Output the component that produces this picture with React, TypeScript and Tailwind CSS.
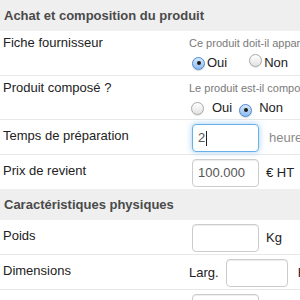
import React from "react";

function Radio({ checked }: { checked?: boolean }) {
  return checked ? (
    <span className="inline-flex h-[13px] w-[13px] shrink-0 items-center justify-center rounded-full border border-[#4a86d4] bg-gradient-to-b from-[#d8e9fb] to-[#8ebbef] shadow-[0_1px_1px_rgba(0,0,0,0.15)]">
      <span className="h-[4px] w-[4px] rounded-full bg-[#1c1c1c]" />
    </span>
  ) : (
    <span className="inline-block h-[13px] w-[13px] shrink-0 rounded-full border border-[#a8a8a8] bg-gradient-to-b from-[#ffffff] to-[#e2e2e2] shadow-[0_1px_1px_rgba(0,0,0,0.1)]" />
  );
}

function Field({ value, focused, w = "w-[67px]" }: { value?: string; focused?: boolean; w?: string }) {
  return (
    <div
      className={
        focused
          ? `${w} h-[28px] shrink-0 rounded-[4px] border border-[#66afe9] bg-white pl-[5px] flex items-center text-[13px] text-[#555] shadow-[0_0_6px_rgba(102,175,233,0.6)]`
          : `${w} h-[28px] shrink-0 rounded-[4px] border border-[#cccccc] bg-white pl-[5px] flex items-center text-[13px] text-[#555] shadow-[inset_0_1px_1px_rgba(0,0,0,0.075)]`
      }
    >
      {value}
      {focused && <span className="ml-[1px] h-[15px] w-px bg-[#222]" />}
    </div>
  );
}

function Header({ title }: { title: string }) {
  return (
    <div className="h-[31px] flex items-center bg-[#efefef] pl-[4px] text-[13px] font-bold text-[#4a4a4a]">
      {title}
    </div>
  );
}

export default function App() {
  return (
    <div className="w-[300px] h-[300px] overflow-hidden bg-white font-['Liberation_Sans',Arial,sans-serif] text-[13px] text-[#222] leading-[18px]">
      <Header title="Achat et composition du produit" />

      <div className="flex h-[45px] border-b border-[#e8e8e8]">
        <div className="w-[189px] shrink-0 pl-[3px] pt-[3px]">Fiche fournisseur</div>
        <div className="pt-[4px] whitespace-nowrap">
          <div className="h-[16px] text-[11px] leading-[16px] text-[#7a7a7a]">Ce produit doit-il apparaître</div>
          <div className="mt-[3px] flex h-[18px] items-center pl-[3px]">
            <Radio checked />
            <span className="ml-[2px]">Oui</span>
            <span className="ml-[22px]"><Radio /></span>
            <span className="ml-[2px]">Non</span>
          </div>
        </div>
      </div>

      <div className="flex h-[44px] border-b border-[#e8e8e8]">
        <div className="w-[189px] shrink-0 pl-[3px] pt-[3px]">Produit composé ?</div>
        <div className="pt-[4px] whitespace-nowrap">
          <div className="h-[16px] text-[11px] leading-[16px] text-[#7a7a7a]">Le produit est-il composé</div>
          <div className="mt-[3px] flex h-[18px] items-center pl-[2px]">
            <Radio />
            <span className="ml-[8px]">Oui</span>
            <span className="ml-[7px]"><Radio checked /></span>
            <span className="ml-[7px]">Non</span>
          </div>
        </div>
      </div>

      <div className="flex h-[35px] border-b border-[#e8e8e8]">
        <div className="w-[192px] shrink-0 pl-[3px] pt-[7px]">Temps de préparation</div>
        <div className="flex pt-[4px] items-start whitespace-nowrap">
          <Field value="2" focused />
          <span className="ml-[10px] mt-[5px] text-[#8a8a8a]">heures</span>
        </div>
      </div>

      <div className="flex h-[34px]">
        <div className="w-[192px] shrink-0 pl-[3px] pt-[7px]">Prix de revient</div>
        <div className="flex pt-[4px] items-start whitespace-nowrap">
          <Field value="100.000" />
          <span className="ml-[7px] mt-[5px]">€ HT</span>
        </div>
      </div>

      <Header title="Caractéristiques physiques" />

      <div className="flex h-[35px] border-b border-[#e8e8e8]">
        <div className="w-[192px] shrink-0 pl-[3px] pt-[7px]">Poids</div>
        <div className="flex pt-[4px] items-start whitespace-nowrap">
          <Field />
          <span className="ml-[7px] mt-[5px]">Kg</span>
        </div>
      </div>

      <div className="flex h-[35px] border-b border-[#e8e8e8]">
        <div className="w-[189px] shrink-0 pl-[3px] pt-[7px]">Dimensions</div>
        <div className="flex pt-[4px] items-start whitespace-nowrap">
          <span className="mt-[5px]">Larg.</span>
          <span className="ml-[7px]"><Field w="w-[62px]" /></span>
          <span className="ml-[10px] mt-[5px]">Haut.</span>
        </div>
      </div>

      <div className="flex h-[35px]">
        <div className="w-[192px] shrink-0 pl-[3px] pt-[7px]">Volume</div>
        <div className="flex pt-[4px] items-start whitespace-nowrap">
          <Field />
          <span className="ml-[8px] mt-[5px]">cm³</span>
        </div>
      </div>
    </div>
  );
}
